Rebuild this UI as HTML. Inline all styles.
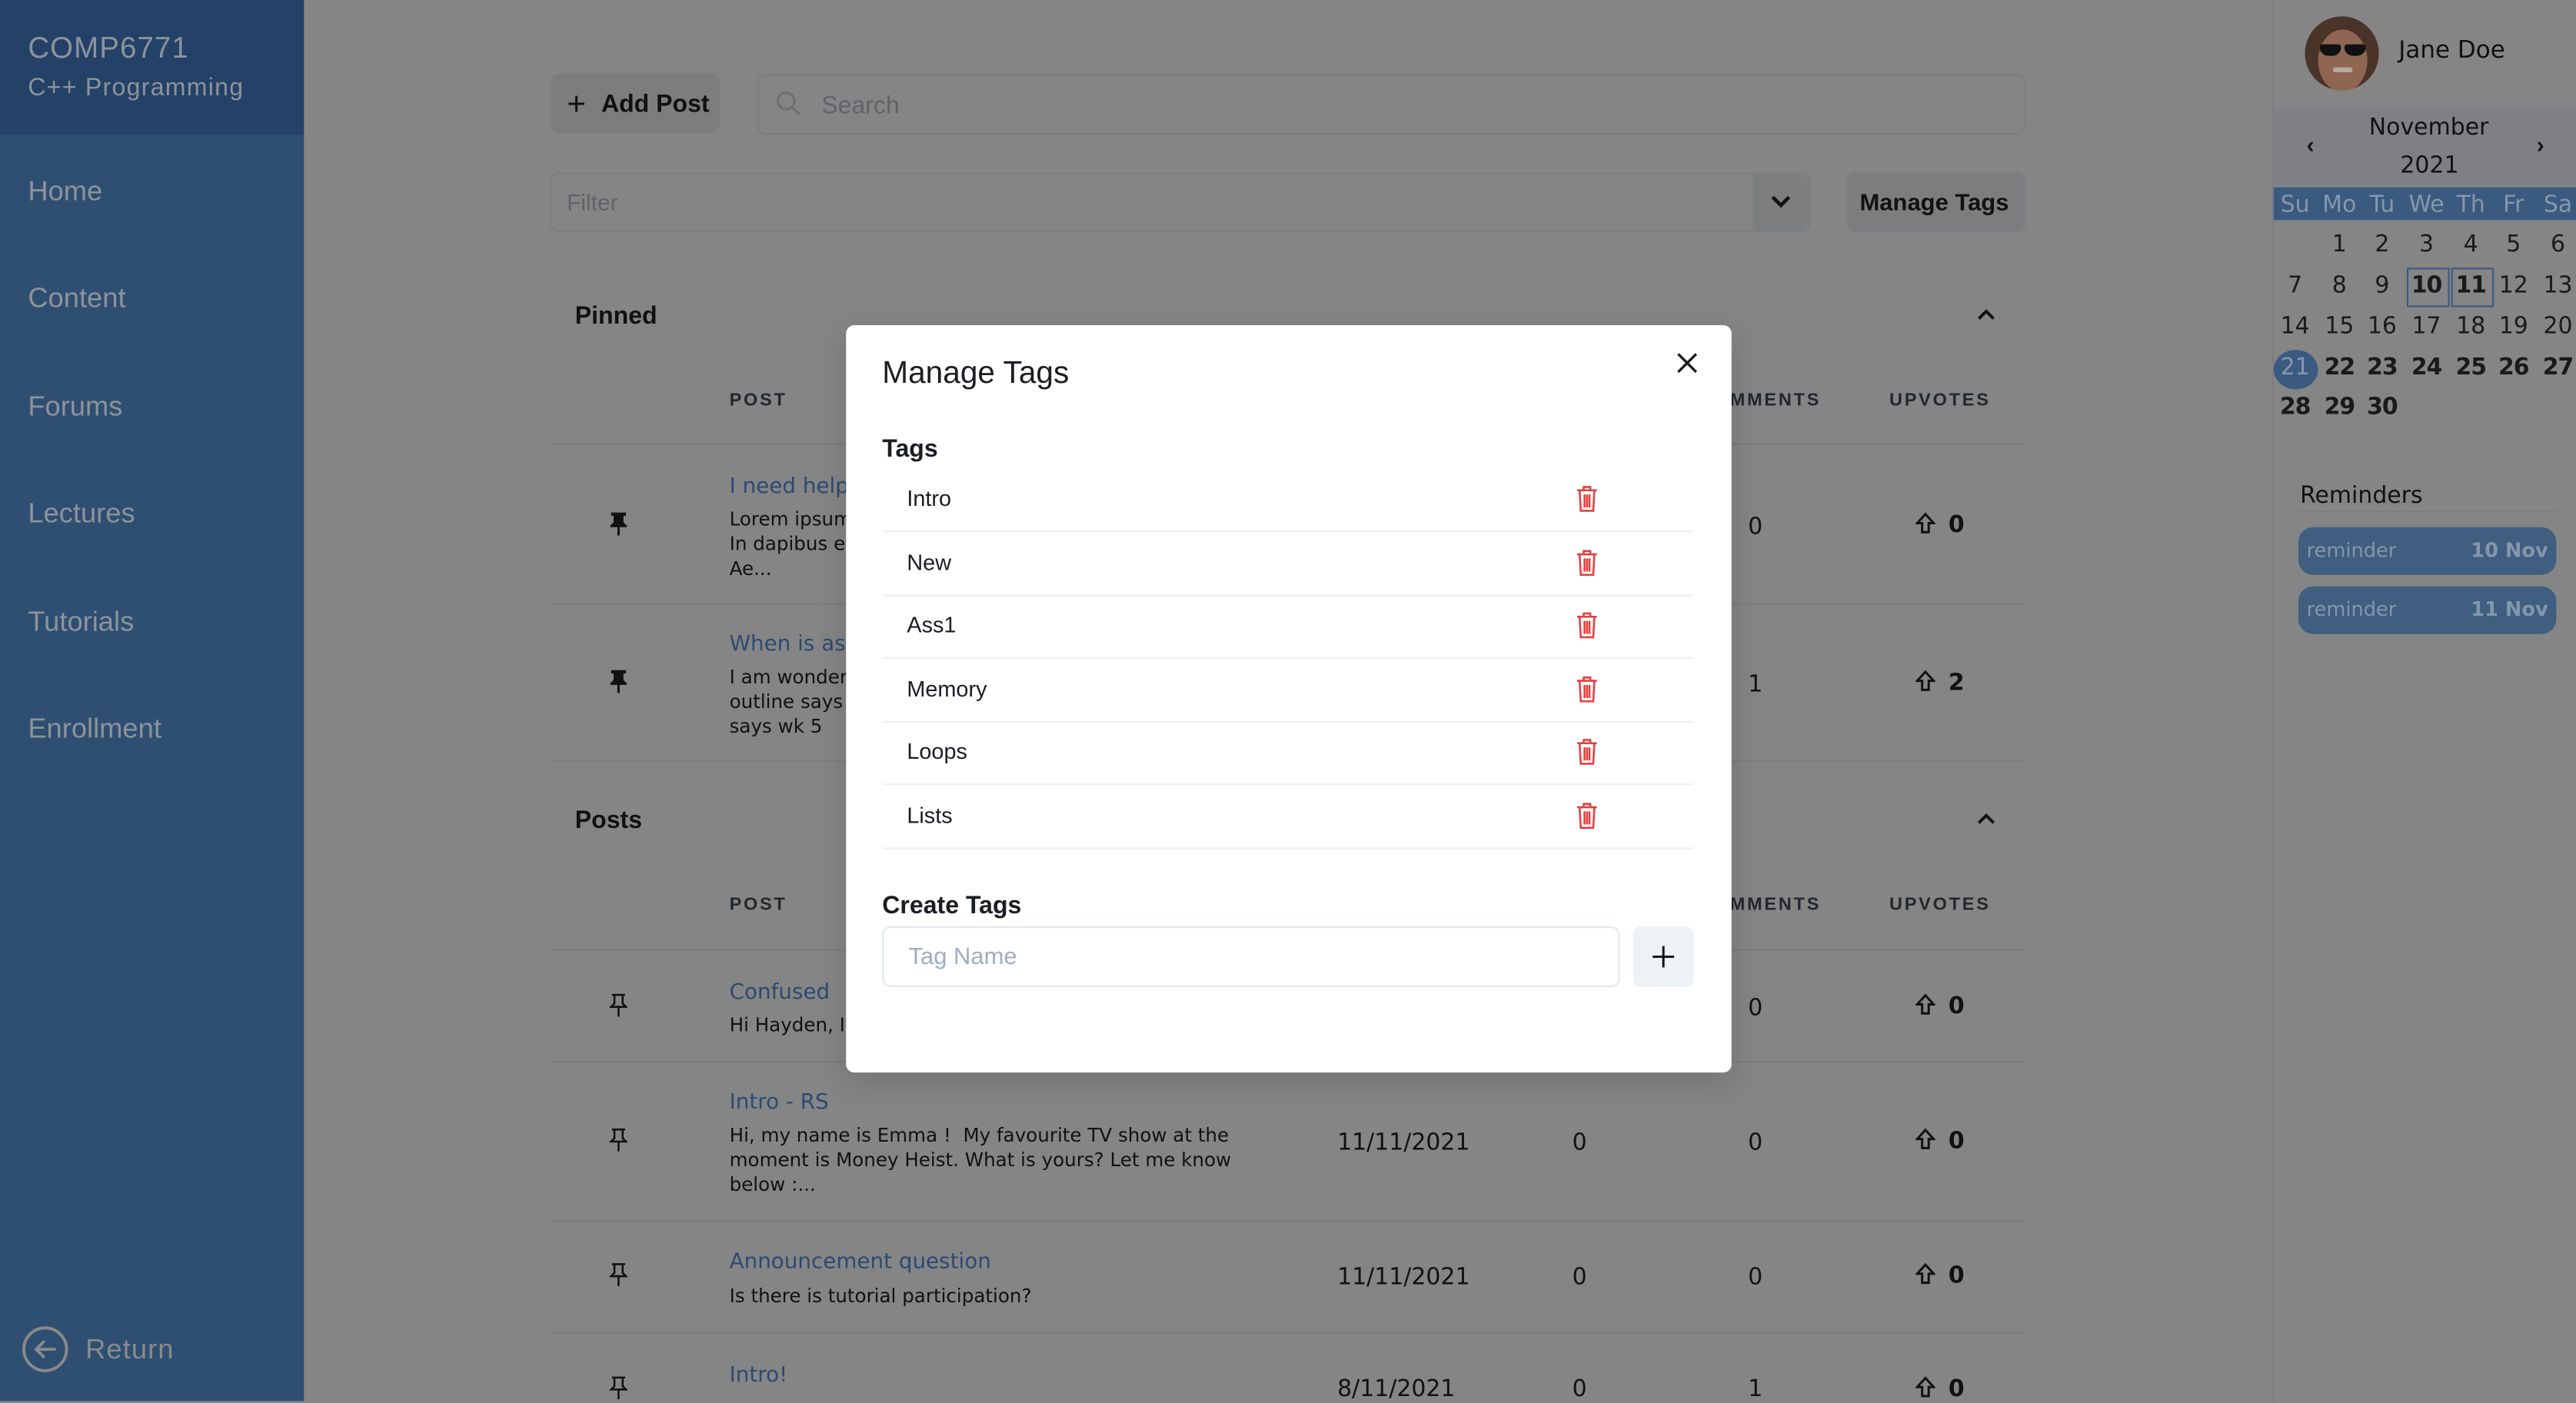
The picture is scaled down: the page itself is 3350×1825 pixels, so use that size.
<!DOCTYPE html>
<html><head><meta charset="utf-8"><style>
html,body{margin:0;padding:0;width:3350px;height:1822px;overflow:hidden;background:#858585;}
#w{position:absolute;left:0;top:0;width:1568px;height:853px;transform:scale(2.13648);transform-origin:0 0;font-family:"Liberation Sans",sans-serif;color:#111;}
.a{position:absolute;white-space:nowrap;}
.nav{position:absolute;left:17px;font-size:17px;color:#8d939a;}
.hd{position:absolute;font-size:11px;font-weight:bold;letter-spacing:1.3px;color:#23272e;}
.ln{position:absolute;left:335px;width:898px;height:1px;background:#7c7c7c;}
.tt{position:absolute;left:444px;font-family:"DejaVu Sans",sans-serif;font-size:13px;color:#2c4a72;}
.tx{position:absolute;left:444px;font-family:"DejaVu Sans",sans-serif;font-size:11.5px;line-height:15px;color:#111;}
.num{position:absolute;font-family:"DejaVu Sans",sans-serif;font-size:14px;color:#111;}
.cal{position:absolute;font-family:"DejaVu Sans",sans-serif;font-size:14px;color:#1a1a1a;width:26px;text-align:center;}
.trow{position:absolute;left:537px;width:494px;height:38px;border-bottom:1.5px solid #edf0f4;}
.trow span{position:absolute;left:15px;top:11px;font-size:13.5px;color:#1a1d22;}
.trow svg{position:absolute;left:422px;top:10px;}
.pill{position:absolute;left:1399px;width:157px;height:29px;border-radius:9px;background:#3f5e80;font-family:'DejaVu Sans',sans-serif;font-size:12px;color:#8596aa;}
.pill span{position:absolute;top:7px;}
</style></head><body><div id="w">
<div class="a" style="left:0;top:0;width:185px;height:853px;background:#2e4f72;"></div>
<div class="a" style="left:0;top:0;width:185px;height:82px;background:#244268;"></div>
<div class="a" style="left:17px;top:19px;font-size:18px;color:#8d939a;letter-spacing:0.5px;">COMP6771</div>
<div class="a" style="left:17px;top:45px;font-size:15px;color:#8d939a;letter-spacing:0.6px;">C++ Programming</div>
<div class="nav" style="top:107px">Home</div>
<div class="nav" style="top:172px">Content</div>
<div class="nav" style="top:238px">Forums</div>
<div class="nav" style="top:303px">Lectures</div>
<div class="nav" style="top:369px">Tutorials</div>
<div class="nav" style="top:434px">Enrollment</div>
<svg class="a" style="left:13px;top:807px" width="29" height="29" viewBox="0 0 29 29"><circle cx="14.5" cy="14.5" r="13" fill="none" stroke="#8a8a8a" stroke-width="1.8"/><path d="M21 14.5H9M14 9.5l-5 5 5 5" fill="none" stroke="#8a8a8a" stroke-width="1.8"/></svg>
<div class="a" style="left:52px;top:812px;font-size:17px;color:#8a8a8a;letter-spacing:0.5px;">Return</div>
<div class="a" style="left:335px;top:45px;width:103px;height:36px;background:#7d7d7f;border-radius:5px;"></div>
<div class="a" style="left:345px;top:53px;font-size:20px;color:#111;">+</div>
<div class="a" style="left:366px;top:55px;font-size:15px;font-weight:bold;color:#111;">Add Post</div>
<div class="a" style="left:461px;top:45px;width:770px;height:35px;border:1px solid #7a7d82;border-radius:5px;"></div>
<svg class="a" style="left:472px;top:55px" width="16" height="16"><circle cx="6.5" cy="6.5" r="5" fill="none" stroke="#6b6e73" stroke-width="1.4"/><path d="M10 10l4.5 4.5" stroke="#6b6e73" stroke-width="1.4"/></svg>
<div class="a" style="left:500px;top:56px;font-size:15px;color:#5f636a;">Search</div>
<div class="a" style="left:335px;top:105px;width:765px;height:34px;border:1px solid #7a7d82;border-radius:5px;"></div>
<div class="a" style="left:1067px;top:106px;width:34px;height:34px;background:#7d7e80;border-radius:0 5px 5px 0;"></div>
<svg class="a" style="left:1077px;top:117px" width="14" height="12"><path d="M2 3l5 5 5-5" fill="none" stroke="#111" stroke-width="2.2"/></svg>
<div class="a" style="left:345px;top:115px;font-size:14px;color:#5f636a;">Filter</div>
<div class="a" style="left:1124px;top:105px;width:109px;height:36px;background:#7d7d7f;border-radius:5px;"></div>
<div class="a" style="left:1132px;top:116px;font-size:14.5px;font-weight:bold;color:#111;">Manage Tags</div>
<div class="a" style="left:350px;top:184px;font-size:15px;font-weight:bold;">Pinned</div>
<svg class="a" style="left:1203px;top:187px" width="12" height="9"><path d="M1.5 7l4.5-4.5 4.5 4.5" fill="none" stroke="#111" stroke-width="1.8"/></svg>
<div class="hd" style="left:444px;top:238px">POST</div>
<div class="hd" style="left:1053px;top:238px">MMENTS</div>
<div class="hd" style="left:1150px;top:238px">UPVOTES</div>
<div class="ln" style="top:270px"></div>
<div class="tt" style="top:289px">I need help</div>
<div class="tx" style="top:309px">Lorem ipsum<br>In dapibus el<br>Ae...</div>
<div class="ln" style="top:367px"></div>
<div class="tt" style="top:385px">When is ass</div>
<div class="tx" style="top:405px">I am wonderi<br>outline says<br>says wk 5</div>
<div class="ln" style="top:463px"></div>
<svg class="a" style="left:371px;top:312px" width="11" height="14"><path d="M1 0h9v2h-1.5v4l2 2v1H0.5V8l2-2V2H1z M4.8 9h1.4v5H4.8z" fill="#111"/></svg>
<svg class="a" style="left:371px;top:408px" width="11" height="14"><path d="M1 0h9v2h-1.5v4l2 2v1H0.5V8l2-2V2H1z M4.8 9h1.4v5H4.8z" fill="#111"/></svg>
<div class="num" style="left:1064px;top:313px">0</div><div class="num" style="left:1064px;top:409px">1</div>
<div class="a" style="left:350px;top:491px;font-size:15px;font-weight:bold;">Posts</div>
<svg class="a" style="left:1203px;top:494px" width="12" height="9"><path d="M1.5 7l4.5-4.5 4.5 4.5" fill="none" stroke="#111" stroke-width="1.8"/></svg>
<div class="hd" style="left:444px;top:545px">POST</div>
<div class="hd" style="left:1053px;top:545px">MMENTS</div>
<div class="hd" style="left:1150px;top:545px">UPVOTES</div>
<div class="ln" style="top:578px"></div>
<div class="tt" style="top:597px">Confused</div>
<div class="tx" style="top:617px">Hi Hayden, I'</div>
<div class="ln" style="top:646px"></div>
<div class="tt" style="top:664px">Intro - RS</div>
<div class="tx" style="top:684px">Hi, my name is Emma !&nbsp; My favourite TV show at the<br>moment is Money Heist. What is yours? Let me know<br>below :...</div>
<div class="ln" style="top:743px"></div>
<div class="tt" style="top:761px">Announcement question</div>
<div class="tx" style="top:782px">Is there is tutorial participation?</div>
<div class="ln" style="top:811px"></div>
<div class="tt" style="top:830px">Intro!</div>
<div class="num" style="left:814px;top:688px">11/11/2021</div><div class="num" style="left:957px;top:688px">0</div><div class="num" style="left:1064px;top:688px">0</div>
<div class="num" style="left:814px;top:770px">11/11/2021</div><div class="num" style="left:957px;top:770px">0</div><div class="num" style="left:1064px;top:770px">0</div>
<div class="num" style="left:814px;top:838px">8/11/2021</div><div class="num" style="left:957px;top:838px">0</div><div class="num" style="left:1064px;top:838px">1</div>
<div class="num" style="left:1064px;top:606px">0</div>
<svg class="a" style="left:371px;top:605px" width="11" height="14"><path d="M1.5 0.7h8M3 0.7v5.3l-2 2h9l-2-2V0.7M5.5 8v6" fill="none" stroke="#111" stroke-width="1.2"/></svg>
<svg class="a" style="left:371px;top:687px" width="11" height="14"><path d="M1.5 0.7h8M3 0.7v5.3l-2 2h9l-2-2V0.7M5.5 8v6" fill="none" stroke="#111" stroke-width="1.2"/></svg>
<svg class="a" style="left:371px;top:769px" width="11" height="14"><path d="M1.5 0.7h8M3 0.7v5.3l-2 2h9l-2-2V0.7M5.5 8v6" fill="none" stroke="#111" stroke-width="1.2"/></svg>
<svg class="a" style="left:371px;top:838px" width="11" height="14"><path d="M1.5 0.7h8M3 0.7v5.3l-2 2h9l-2-2V0.7M5.5 8v6" fill="none" stroke="#111" stroke-width="1.2"/></svg>
<svg class="a" style="left:1166px;top:312px" width="12" height="14"><path d="M6 1L1 6.5h3V12h4V6.5h3z" fill="none" stroke="#111" stroke-width="1.4"/></svg><div class="num" style="left:1186px;top:312px;font-weight:bold">0</div>
<svg class="a" style="left:1166px;top:408px" width="12" height="14"><path d="M6 1L1 6.5h3V12h4V6.5h3z" fill="none" stroke="#111" stroke-width="1.4"/></svg><div class="num" style="left:1186px;top:408px;font-weight:bold">2</div>
<svg class="a" style="left:1166px;top:605px" width="12" height="14"><path d="M6 1L1 6.5h3V12h4V6.5h3z" fill="none" stroke="#111" stroke-width="1.4"/></svg><div class="num" style="left:1186px;top:605px;font-weight:bold">0</div>
<svg class="a" style="left:1166px;top:687px" width="12" height="14"><path d="M6 1L1 6.5h3V12h4V6.5h3z" fill="none" stroke="#111" stroke-width="1.4"/></svg><div class="num" style="left:1186px;top:687px;font-weight:bold">0</div>
<svg class="a" style="left:1166px;top:769px" width="12" height="14"><path d="M6 1L1 6.5h3V12h4V6.5h3z" fill="none" stroke="#111" stroke-width="1.4"/></svg><div class="num" style="left:1186px;top:769px;font-weight:bold">0</div>
<svg class="a" style="left:1166px;top:838px" width="12" height="14"><path d="M6 1L1 6.5h3V12h4V6.5h3z" fill="none" stroke="#111" stroke-width="1.4"/></svg><div class="num" style="left:1186px;top:838px;font-weight:bold">0</div>
<div class="a" style="left:1383px;top:0;width:1px;height:853px;background:#7a7d82;"></div>
<div class="a" style="left:1403px;top:10px;width:45px;height:45px;border-radius:50%;overflow:hidden;background:#4a3328;">
 <div class="a" style="left:8px;top:8px;width:30px;height:38px;border-radius:50%;background:#8f6652;"></div>
 <div class="a" style="left:9px;top:17px;width:13px;height:7px;background:#111;border-radius:2px 2px 6px 6px;"></div>
 <div class="a" style="left:24px;top:17px;width:13px;height:7px;background:#111;border-radius:2px 2px 6px 6px;"></div>
 <div class="a" style="left:17px;top:31px;width:12px;height:3px;background:#b8a8a0;border-radius:2px;"></div>
</div>
<div class="a" style="left:1460px;top:23px;font-family:'DejaVu Sans',sans-serif;font-size:14.5px;color:#111;">Jane Doe</div>
<div class="a" style="left:1384px;top:66px;width:184px;height:47px;background:#7f8084;"></div>
<div class="a" style="left:1442px;top:70px;font-family:'DejaVu Sans',sans-serif;font-size:14px;color:#111;">November</div>
<div class="a" style="left:1461px;top:93px;font-family:'DejaVu Sans',sans-serif;font-size:14px;color:#111;">2021</div>
<div class="a" style="left:1404px;top:80px;font-size:14px;font-weight:bold;">‹</div>
<div class="a" style="left:1544px;top:80px;font-size:14px;font-weight:bold;">›</div>
<div class="a" style="left:1384px;top:114px;width:184px;height:20px;background:#3a5a80;"></div>
<div class="cal" style="left:1384px;top:117px;color:#8797aa">Su</div><div class="cal" style="left:1411px;top:117px;color:#8797aa">Mo</div><div class="cal" style="left:1437px;top:117px;color:#8797aa">Tu</div><div class="cal" style="left:1464px;top:117px;color:#8797aa">We</div><div class="cal" style="left:1491px;top:117px;color:#8797aa">Th</div><div class="cal" style="left:1517px;top:117px;color:#8797aa">Fr</div><div class="cal" style="left:1544px;top:117px;color:#8797aa">Sa</div>
<div class="cal" style="left:1411px;top:141px">1</div><div class="cal" style="left:1437px;top:141px">2</div><div class="cal" style="left:1464px;top:141px">3</div><div class="cal" style="left:1491px;top:141px">4</div><div class="cal" style="left:1517px;top:141px">5</div><div class="cal" style="left:1544px;top:141px">6</div>
<div class="a" style="left:1465px;top:163px;width:24px;height:22px;border:1px solid #3a5a80;"></div>
<div class="a" style="left:1492px;top:163px;width:24px;height:22px;border:1px solid #3a5a80;"></div>
<div class="cal" style="left:1384px;top:166px">7</div><div class="cal" style="left:1411px;top:166px">8</div><div class="cal" style="left:1437px;top:166px">9</div><div class="cal" style="left:1464px;top:166px;font-weight:bold;letter-spacing:-0.5px">10</div><div class="cal" style="left:1491px;top:166px;font-weight:bold;letter-spacing:-0.5px">11</div><div class="cal" style="left:1517px;top:166px">12</div><div class="cal" style="left:1544px;top:166px">13</div>
<div class="cal" style="left:1384px;top:191px">14</div><div class="cal" style="left:1411px;top:191px">15</div><div class="cal" style="left:1437px;top:191px">16</div><div class="cal" style="left:1464px;top:191px">17</div><div class="cal" style="left:1491px;top:191px">18</div><div class="cal" style="left:1517px;top:191px">19</div><div class="cal" style="left:1544px;top:191px">20</div>
<div class="a" style="left:1384px;top:213px;width:27px;height:24px;border-radius:50%;background:#3a5a80;"></div>
<div class="cal" style="left:1384px;top:216px;color:#8797aa">21</div><div class="cal" style="left:1411px;top:216px;font-weight:bold;letter-spacing:-0.5px">22</div><div class="cal" style="left:1437px;top:216px;font-weight:bold;letter-spacing:-0.5px">23</div><div class="cal" style="left:1464px;top:216px;font-weight:bold;letter-spacing:-0.5px">24</div><div class="cal" style="left:1491px;top:216px;font-weight:bold;letter-spacing:-0.5px">25</div><div class="cal" style="left:1517px;top:216px;font-weight:bold;letter-spacing:-0.5px">26</div><div class="cal" style="left:1544px;top:216px;font-weight:bold;letter-spacing:-0.5px">27</div>
<div class="cal" style="left:1384px;top:240px;font-weight:bold;letter-spacing:-0.5px">28</div><div class="cal" style="left:1411px;top:240px;font-weight:bold;letter-spacing:-0.5px">29</div><div class="cal" style="left:1437px;top:240px;font-weight:bold;letter-spacing:-0.5px">30</div>
<div class="a" style="left:1400px;top:294px;font-family:'DejaVu Sans',sans-serif;font-size:14px;color:#111;">Reminders</div>
<div class="a" style="left:1399px;top:311px;width:157px;height:1px;background:#7a7d82;"></div>
<div class="pill" style="top:321px"><span style="left:5px">reminder</span><span style="right:5px;font-weight:bold">10 Nov</span></div>
<div class="pill" style="top:357px"><span style="left:5px">reminder</span><span style="right:5px;font-weight:bold">11 Nov</span></div>
<div class="a" style="left:515px;top:198px;width:539px;height:455px;background:#fff;border-radius:5px;box-shadow:0 6px 20px rgba(0,0,0,0.15);"></div>
<div class="a" style="left:537px;top:217px;font-size:19px;font-weight:500;color:#1a1d22;">Manage Tags</div>
<svg class="a" style="left:1020px;top:214px" width="14" height="14"><path d="M1.5 1.5l11 11M12.5 1.5l-11 11" stroke="#1a1d22" stroke-width="1.6"/></svg>
<div class="a" style="left:537px;top:265px;font-size:15px;font-weight:bold;color:#1a1d22;">Tags</div>
<div class="trow" style="top:285px"><span>Intro</span><svg width="14" height="17" viewBox="0 0 14 17"><path d="M1 3.5h12M5 3.5V1.5h4v2M2.5 3.5l0.7 12.5h7.6l0.7-12.5M5.5 6v8M7 6v8M8.5 6v8" fill="none" stroke="#e53e3e" stroke-width="1.2"/></svg></div>
<div class="trow" style="top:323.5px"><span>New</span><svg width="14" height="17" viewBox="0 0 14 17"><path d="M1 3.5h12M5 3.5V1.5h4v2M2.5 3.5l0.7 12.5h7.6l0.7-12.5M5.5 6v8M7 6v8M8.5 6v8" fill="none" stroke="#e53e3e" stroke-width="1.2"/></svg></div>
<div class="trow" style="top:362px"><span>Ass1</span><svg width="14" height="17" viewBox="0 0 14 17"><path d="M1 3.5h12M5 3.5V1.5h4v2M2.5 3.5l0.7 12.5h7.6l0.7-12.5M5.5 6v8M7 6v8M8.5 6v8" fill="none" stroke="#e53e3e" stroke-width="1.2"/></svg></div>
<div class="trow" style="top:400.5px"><span>Memory</span><svg width="14" height="17" viewBox="0 0 14 17"><path d="M1 3.5h12M5 3.5V1.5h4v2M2.5 3.5l0.7 12.5h7.6l0.7-12.5M5.5 6v8M7 6v8M8.5 6v8" fill="none" stroke="#e53e3e" stroke-width="1.2"/></svg></div>
<div class="trow" style="top:439px"><span>Loops</span><svg width="14" height="17" viewBox="0 0 14 17"><path d="M1 3.5h12M5 3.5V1.5h4v2M2.5 3.5l0.7 12.5h7.6l0.7-12.5M5.5 6v8M7 6v8M8.5 6v8" fill="none" stroke="#e53e3e" stroke-width="1.2"/></svg></div>
<div class="trow" style="top:477.5px"><span>Lists</span><svg width="14" height="17" viewBox="0 0 14 17"><path d="M1 3.5h12M5 3.5V1.5h4v2M2.5 3.5l0.7 12.5h7.6l0.7-12.5M5.5 6v8M7 6v8M8.5 6v8" fill="none" stroke="#e53e3e" stroke-width="1.2"/></svg></div>
<div class="a" style="left:537px;top:543px;font-size:15px;font-weight:bold;color:#1a1d22;">Create Tags</div>
<div class="a" style="left:537px;top:564px;width:447px;height:35px;border:1px solid #e2e8f0;border-radius:5px;"></div>
<div class="a" style="left:553px;top:575px;font-size:14.5px;color:#a0aec0;">Tag Name</div>
<div class="a" style="left:994px;top:564px;width:37px;height:37px;background:#edf2f7;border-radius:5px;"></div>
<svg class="a" style="left:1005px;top:575px" width="15" height="15"><path d="M7.5 1v13M1 7.5h13" stroke="#111" stroke-width="1.4"/></svg>
</div></body></html>
